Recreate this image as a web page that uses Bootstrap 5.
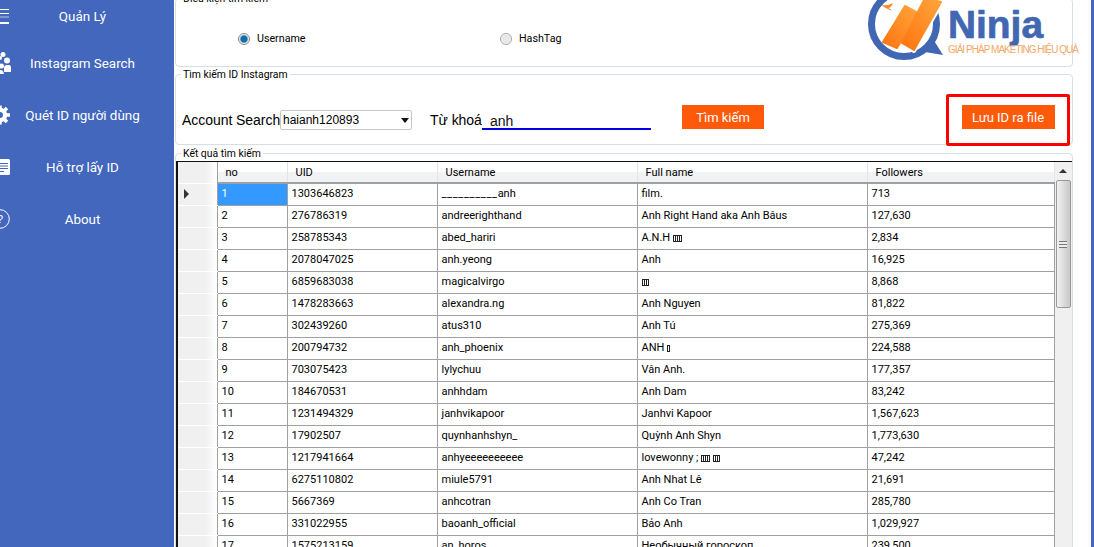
<!DOCTYPE html>
<html lang="en">
<head>
    <meta charset="UTF-8">
    <title>Ninja - Quét ID Instagram</title>
    <link rel="stylesheet" href="https://cdn.jsdelivr.net/npm/bootstrap@5.3.0/dist/css/bootstrap.min.css">
    <style>
        html, body { height: 547px; overflow: hidden; }
        body { background: #fff; color: #000; font-family: Roboto, "Liberation Sans", Arial, sans-serif; font-size: 11px; }

        /* sidebar */
        .side-nav { width: 174px; background: #4267bd; color: #fff; font-size: 13.4px; }
        .side-item { height: 52px; }
        .side-item:first-child { height: 32px; margin-bottom: 5px; }
        .side-icon { width: 12px; height: 24px; display: block; }
        .side-label { width: 141px; padding-top: 2px; text-align: center; }

        /* main area */
        .work-area { width: 899px; position: relative; }
        .right-strip { width: 21px; }
        .right-strip::after { content: ""; display: block; width: 3px; height: 100%; margin-left: 18px; background: #4267bd; }
        .grp { border: 1px solid #d5dfe5; border-radius: 4px; padding: 0; margin: 0 0 0 1px; min-width: 0; }
        .grp legend { float: none; width: auto; font-size: 10.4px; line-height: 14px; margin: 0 0 0 5px; padding: 2px 2px 0; }
        .grp-filter { height: 77px; margin-top: -10px; }
        .grp-search { height: 79px; margin-top: -1px; }
        .grp-result { height: 420px; }

        .radio-row { padding: 26px 0 0 62px; }
        .radio-item { width: 262px; line-height: 14px; font-size: 10.7px; }
        .radio-dot { width: 12px; height: 12px; margin: 0 7px 0 0; background: radial-gradient(circle, #e8e8e8 0 4px, #fff 5px); border: 1px solid #a5a5a5; }
        .radio-dot:checked { background: radial-gradient(circle, #0d6ea8 0 3px, #bcd 4px, #fff 5px); border-color: #8a8a8a; }

        .search-row { padding: 12px 0 0 6px; height: 58px; }
        .field-label { font-family: "Liberation Sans", Arial, sans-serif; font-size: 14px; line-height: 20px; letter-spacing: -.05px; }
        .lbl-account { width: 98px; white-space: nowrap; margin-top: 16px; }
        .acc-select { width: 132px; height: 20px; margin-top: 16px; padding: 0 0 0 2px; font-family: "Liberation Sans", Arial, sans-serif; font-size: 12px; line-height: 18px; border: 1px solid #c8c8c8; border-radius: 2px; color: #000;
            background-image: url("data:image/svg+xml,%3Csvg xmlns='http://www.w3.org/2000/svg' width='8' height='5'%3E%3Cpath d='M0 0h8L4 5z' fill='%23111'/%3E%3C/svg%3E"); background-position: right 2px center; background-size: 8px 5px; }
        .lbl-keyword { margin: 16px 0 0 18px; width: 52px; white-space: nowrap; }
        .kw-input { width: 169px; height: 20px; margin-top: 16px; padding: 3px 0 0 8px; font-family: "Liberation Sans", Arial, sans-serif; font-size: 14px; line-height: 16px; border: 0; border-bottom: 2px solid #0000e0; border-radius: 0; color: #111; }
        .act-btn { height: 24px; padding: 1px 0 0; border: 0; border-radius: 0; background: #ff5a0a; color: #fff; font-size: 13px; line-height: 23px; }
        .btn-find { width: 82px; margin: 11px 0 0 31px; }
        .save-box { width: 124px; height: 52px; margin: 0 0 0 182px; padding-bottom: 6px; border: 3px solid #f00; border-radius: 2px; }
        .btn-save { width: 93px; }

        /* data grid */
        .id-grid { height: 400px; border: 2px solid #111; border-top-width: 1px; border-bottom: 0; border-right-width: 1px; background: #f0f0f0; }
        .grid-table { width: 876px; table-layout: fixed; margin: 0; background: #fff; font-size: 11px; line-height: 14px; color: #000; }
        .grid-table th, .grid-table td { padding: 0 0 0 4px; border: 0; border-right: 1px solid #a0a0a0; border-bottom: 1px solid #a0a0a0; height: 22px; vertical-align: middle; white-space: nowrap; overflow: hidden; box-shadow: none; background: #fff; color: #000; }
        .grid-table thead th { height: 21px; padding: 2px 0 0 8px; font-weight: 400; border-right: 1px solid #e4e4e4; border-bottom: 2px solid #a0a0a0; background: linear-gradient(#fff 0 50%, #f1f2f3 50%); }
        .grid-table th.row-head, .grid-table td.row-head { background: linear-gradient(90deg, #f0f0f0 0 70%, #fff); border-bottom: 1px solid #fff; border-right: 1px solid #a0a0a0; padding: 0 0 0 6px; }
        .grid-table td.cell-current { background: #3399ff; color: #fff; }
        .row-arrow { width: 0; height: 0; display: block; border-left: 5px solid #333; border-top: 5px solid transparent; border-bottom: 5px solid transparent; }
        .under-run { letter-spacing: .65px; }
        .tofu { display: inline-block; width: 9px; height: 7px; vertical-align: middle; background: repeating-linear-gradient(90deg, #222 0 1px, #fff 1px 2px); border-top: 1px solid #222; border-bottom: 1px solid #222; }
        .tofu-3 { width: 7px; }
        .tofu-1 { width: 3px; }

        .v-scroll { width: 17px; background: #f0f0f0; }
        .scroll-up { height: 18px; }
        .scroll-up::before { content: ""; border-left: 4px solid transparent; border-right: 4px solid transparent; border-bottom: 4px solid #333; }
        .scroll-thumb { height: 128px; margin: 0 1px; border: 1px solid #9a9a9a; border-radius: 2px; background: linear-gradient(90deg, #f2f2f2, #dcdcdc 50%, #c8c8c8); }
        .scroll-grip { width: 8px; height: 7px; background: repeating-linear-gradient(#777 0 1px, #eee 1px 3px); }

        /* logo */
        .ninja-logo { position: absolute; left: 694px; top: 0; width: 226px; height: 62px; overflow: visible; }
        .logo-name { font-family: "Liberation Sans", Arial, sans-serif; font-weight: 700; font-size: 38px; fill: #4267b2; stroke: #4267b2; stroke-width: .7px; }
        .logo-tag { font-family: "Liberation Sans", Arial, sans-serif; font-size: 10px; fill: #f5a866; }
    </style>
</head>
<body class="d-flex">

    <nav class="side-nav flex-shrink-0 d-flex flex-column">
        <div class="side-item d-flex align-items-center">
            <svg class="side-icon" viewBox="0 0 12 24"><path d="M0 5.500h9M0 9.500h9M0 18.500h9M0 19.500h9" stroke="#fff" fill="none"/><path d="M0 13h9" stroke="#b9c7e8" fill="none"/></svg>
            <span class="side-label">Quản Lý</span>
        </div>
        <div class="side-item d-flex align-items-center">
            <svg class="side-icon" viewBox="0 0 12 24"><g fill="#fff"><circle cx="3" cy="3.500" r="2.500"/><circle cx="7" cy="9.500" r="3"/><path d="M4 17q0-3 3-3h2q2 0 2 3v4H4z"/><circle cx="1.500" cy="15" r="2.500"/><path d="M-3 23q0-4 3-4h1q2 0 3 4z"/><circle cx="0" cy="7" r="2"/></g></svg>
            <span class="side-label">Instagram Search</span>
        </div>
        <div class="side-item d-flex align-items-center">
            <svg class="side-icon" viewBox="0 0 12 24"><circle cx="0" cy="12" r="5" fill="none" stroke="#fff" stroke-width="4.500"/><path d="M0 12V2.500M0 12l7-7M0 12h10M0 12l7 7M0 12v9.500" stroke="#fff" stroke-width="3.500"/><circle cx="0" cy="12" r="3" fill="#4267bd"/></svg>
            <span class="side-label">Quét ID người dùng</span>
        </div>
        <div class="side-item d-flex align-items-center">
            <svg class="side-icon" viewBox="0 0 12 24"><rect x="-5" y="4" width="15" height="16" rx="1.500" fill="#fff"/><path d="M0 8.500h8M0 11h8M0 13.500h8M-3 16.500h7" stroke="#4267bd" fill="none"/></svg>
            <span class="side-label">Hỗ trợ lấy ID</span>
        </div>
        <div class="side-item d-flex align-items-center">
            <svg class="side-icon" viewBox="0 0 12 24"><circle cx="0" cy="12" r="9.300" fill="none" stroke="#fff"/><text x="-3" y="16" font-size="11" fill="#fff" font-family="Liberation Sans">?</text></svg>
            <span class="side-label">About</span>
        </div>
    </nav>

    <main class="work-area flex-shrink-0">
        <svg class="ninja-logo" viewBox="0 0 226 62">
            <defs>
                <linearGradient id="barFill" x1="0" y1="1" x2="1" y2="0">
                    <stop offset="0" stop-color="#ff7412"/>
                    <stop offset="1" stop-color="#ffa53a"/>
                </linearGradient>
            </defs>
            <circle cx="36" cy="24" r="32.500" fill="none" stroke="#4267b2" stroke-width="7"/>
            <path d="M57 52L75 55 65 39z" fill="#4267b2"/>
            <path d="M33 43L57 -3 75 1 46 51z" fill="#fff" stroke="#fff" stroke-width="4" stroke-linejoin="round"/>
            <path d="M15 42L37 6 50 13 29 48z" fill="url(#barFill)" stroke="url(#barFill)" stroke-width="2" stroke-linejoin="round"/>
            <path d="M34 43L57 -2 73 2 46 50z" fill="url(#barFill)" stroke="url(#barFill)" stroke-width="2" stroke-linejoin="round"/>
            <path d="M13 5q7 1 12-2-2 5-5 5 2 0 4 3-7-3-11-6z" fill="#f58a2a"/>
            <text class="logo-name" x="80" y="38" textLength="95" lengthAdjust="spacingAndGlyphs">Ninja</text>
            <text class="logo-tag" x="80" y="53" textLength="131" lengthAdjust="spacing">GIẢI PHÁP MAKETING HIỆU QUẢ</text>
        </svg>

        <fieldset class="grp grp-filter">
            <legend>Điều kiện tìm kiếm</legend>
            <div class="radio-row d-flex">
                <label class="radio-item d-flex align-items-center"><input class="form-check-input radio-dot" type="radio" name="mode" checked>Username</label>
                <label class="radio-item d-flex align-items-center"><input class="form-check-input radio-dot" type="radio" name="mode">HashTag</label>
            </div>
        </fieldset>

        <fieldset class="grp grp-search">
            <legend>Tìm kiếm ID Instagram</legend>
            <div class="search-row d-flex align-items-start">
                <span class="field-label lbl-account">Account Search</span>
                <select class="form-select acc-select"><option>haianh120893</option></select>
                <span class="field-label lbl-keyword">Từ khoá</span>
                <input class="form-control kw-input" type="text" value="anh">
                <button class="btn act-btn btn-find" type="button">Tìm kiếm</button>
                <div class="save-box d-flex align-items-center justify-content-center">
                    <button class="btn act-btn btn-save" type="button">Lưu ID ra file</button>
                </div>
            </div>
        </fieldset>

        <fieldset class="grp grp-result">
            <legend>Kết quả tìm kiếm</legend>
            <div class="id-grid d-flex">
                <table class="table grid-table align-self-start">
                    <colgroup><col style="width:39px"><col style="width:70px"><col style="width:150px"><col style="width:200px"><col style="width:230px"><col style="width:187px"></colgroup>
                    <thead>
                        <tr><th class="row-head"></th><th>no</th><th>UID</th><th>Username</th><th>Full name</th><th>Followers</th></tr>
                    </thead>
                    <tbody>
                        <tr><td class="row-head"><span class="row-arrow"></span></td><td class="cell-current">1</td><td>1303646823</td><td><span class="under-run">__________</span>anh</td><td>film.</td><td>713</td></tr>
                        <tr><td class="row-head"></td><td>2</td><td>276786319</td><td>andreerighthand</td><td>Anh Right Hand aka Anh Bâus</td><td>127,630</td></tr>
                        <tr><td class="row-head"></td><td>3</td><td>258785343</td><td>abed_hariri</td><td>A.N.H <span class="tofu"></span></td><td>2,834</td></tr>
                        <tr><td class="row-head"></td><td>4</td><td>2078047025</td><td>anh.yeong</td><td>Anh</td><td>16,925</td></tr>
                        <tr><td class="row-head"></td><td>5</td><td>6859683038</td><td>magicalvirgo</td><td><span class="tofu tofu-3"></span></td><td>8,868</td></tr>
                        <tr><td class="row-head"></td><td>6</td><td>1478283663</td><td>alexandra.ng</td><td>Anh Nguyen</td><td>81,822</td></tr>
                        <tr><td class="row-head"></td><td>7</td><td>302439260</td><td>atus310</td><td>Anh Tú</td><td>275,369</td></tr>
                        <tr><td class="row-head"></td><td>8</td><td>200794732</td><td>anh_phoenix</td><td>ANH <span class="tofu tofu-1"></span></td><td>224,588</td></tr>
                        <tr><td class="row-head"></td><td>9</td><td>703075423</td><td>lylychuu</td><td>Vân Anh.</td><td>177,357</td></tr>
                        <tr><td class="row-head"></td><td>10</td><td>184670531</td><td>anhhdam</td><td>Anh Dam</td><td>83,242</td></tr>
                        <tr><td class="row-head"></td><td>11</td><td>1231494329</td><td>janhvikapoor</td><td>Janhvi Kapoor</td><td>1,567,623</td></tr>
                        <tr><td class="row-head"></td><td>12</td><td>17902507</td><td>quynhanhshyn_</td><td>Quỳnh Anh Shyn</td><td>1,773,630</td></tr>
                        <tr><td class="row-head"></td><td>13</td><td>1217941664</td><td>anhyeeeeeeeeee</td><td>lovewonny ; <span class="tofu"></span> <span class="tofu tofu-3"></span></td><td>47,242</td></tr>
                        <tr><td class="row-head"></td><td>14</td><td>6275110802</td><td>miule5791</td><td>Anh Nhat Lê</td><td>21,691</td></tr>
                        <tr><td class="row-head"></td><td>15</td><td>5667369</td><td>anhcotran</td><td>Anh Co Tran</td><td>285,780</td></tr>
                        <tr><td class="row-head"></td><td>16</td><td>331022955</td><td>baoanh_official</td><td>Bảo Anh</td><td>1,029,927</td></tr>
                        <tr><td class="row-head"></td><td>17</td><td>1575213159</td><td>an_horos</td><td>Необычный гороскоп</td><td>239,500</td></tr>
                    </tbody>
                </table>
                <div class="v-scroll flex-shrink-0">
                    <div class="scroll-up d-flex align-items-center justify-content-center"></div>
                    <div class="scroll-thumb d-flex align-items-center justify-content-center"><span class="scroll-grip"></span></div>
                </div>
            </div>
        </fieldset>
    </main>

    <div class="right-strip flex-shrink-0"></div>

    <script src="https://cdn.jsdelivr.net/npm/bootstrap@5.3.0/dist/js/bootstrap.bundle.min.js"></script>
</body>
</html>
